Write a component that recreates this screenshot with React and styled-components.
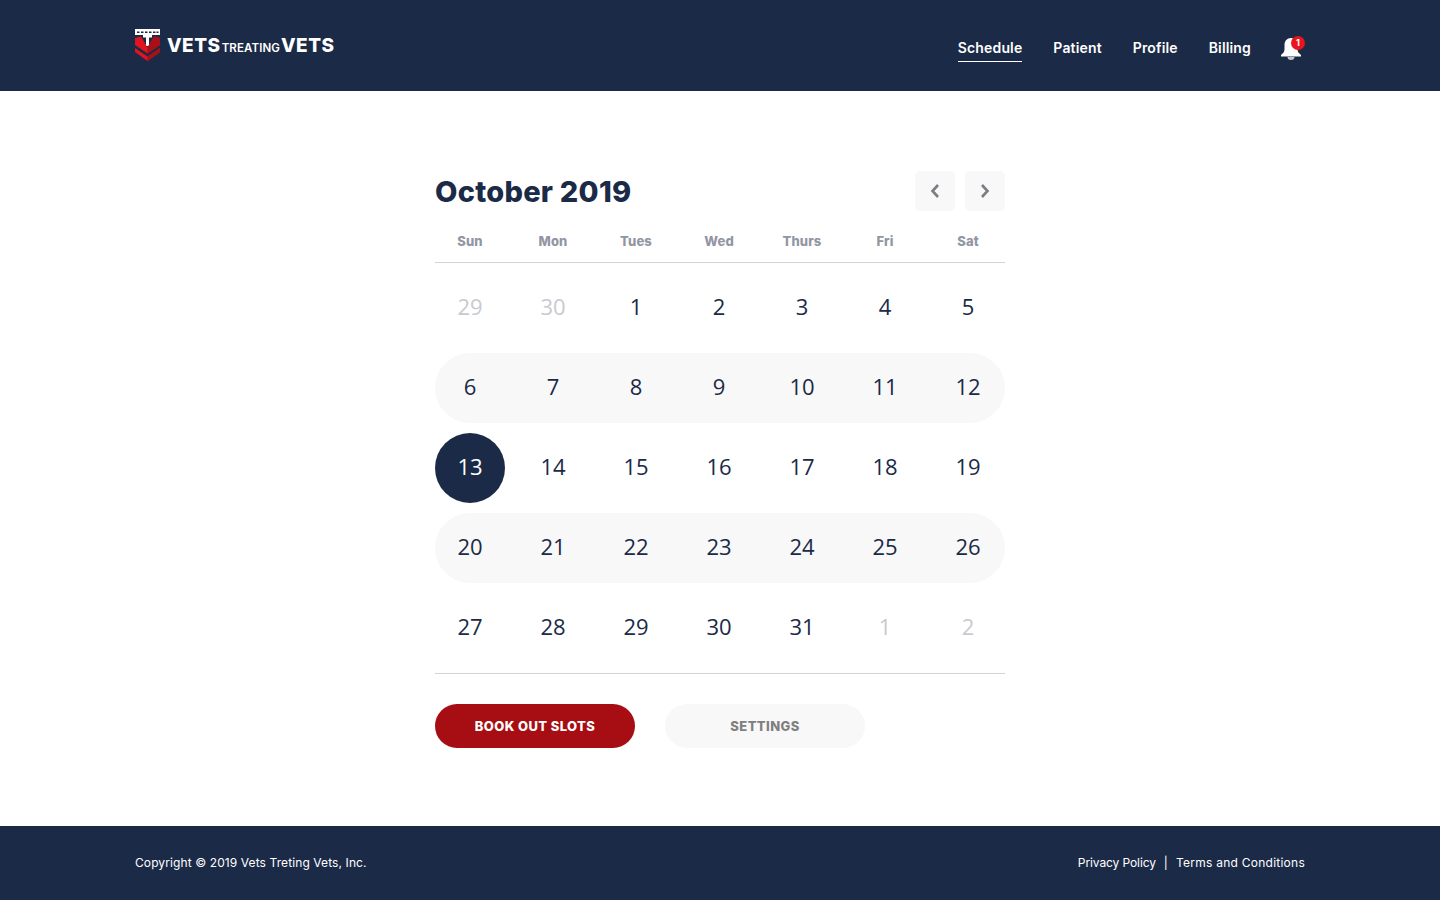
import React from "react";
import styled, { createGlobalStyle } from "styled-components";

const NAVY = "#1b2a47";

const GlobalStyle = createGlobalStyle`
  html, body { margin: 0; padding: 0; background: #fff; }
  body { font-family: Inter, "Liberation Sans", sans-serif; color: ${NAVY}; }
  * { box-sizing: border-box; }
`;

const weeks = [
  [[29, 1], [30, 1], [1], [2], [3], [4], [5]],
  [[6], [7], [8], [9], [10], [11], [12]],
  [[13, 0, 1], [14], [15], [16], [17], [18], [19]],
  [[20], [21], [22], [23], [24], [25], [26]],
  [[27], [28], [29], [30], [31], [1, 1], [2, 1]],
];

const days = ["Sun", "Mon", "Tues", "Wed", "Thurs", "Fri", "Sat"];
const navItems = ["Schedule", "Patient", "Profile", "Billing"];

function Shield() {
  return (
    <svg width="26" height="33" viewBox="0 0 26 33">
      <path d="M0 0h25v6H0z" fill="#fff" />
      <path d="M2 2.500h2.500V4H2zM6 2.500h2.500V4H6zM10 2.500h2.500V4H10zM14 2.500h2.500V4H14zM18 2.500h2.500V4H18zM21.500 2.500h2V4h-2z" fill="#1b2a47" />
      <path d="M8 6h9v2.500h-3V17h-3V8.500H8z" fill="#fff" />
      <path d="M0 9l6-1.500 6.500 11 6.500-11L25 9v7l-12.500 8.500L0 16z" fill="#e0141e" />
      <path d="M12.500 18.500L19 7.500 25 9v7l-12.500 8.500z" fill="#a80f16" />
      <path d="M0 19l12.500 8.500L25 19v4l-12.500 9L0 23z" fill="#e0141e" />
      <path d="M12.500 27.500L25 19v4l-12.500 9z" fill="#a80f16" />
    </svg>
  );
}

function Bell() {
  return (
    <svg width="20" height="22" viewBox="0 0 20 22">
      <path d="M10 0C6 0 3.500 3 3.500 7v4.500C3.500 14 1.800 15.500 0 17v1.500h20V17c-1.800-1.500-3.500-3-3.500-5.500V7C16.500 3 14 0 10 0z" fill="#fff" />
      <path d="M6.500 19h7a3.500 3 0 0 1-7 0z" fill="#c3c7ce" />
    </svg>
  );
}

function Chevron({ flip }) {
  return (
    <svg width="10" height="14" viewBox="0 0 10 14">
      <path
        d={flip ? "M2 1l5.500 6L2 13" : "M8 1L2.500 7 8 13"}
        fill="none"
        stroke="#7a7d84"
        strokeWidth="2.600"
      />
    </svg>
  );
}

export default function App() {
  return (
    <Page>
      <GlobalStyle />
      <Header>
        <Logo>
          <Shield />
          <LogoText>
            VETS<LogoSmall>TREATING</LogoSmall>VETS
          </LogoText>
        </Logo>
        <Nav>
          {navItems.map((item, i) => (
            <NavLink key={item} $active={i === 0}>{item}</NavLink>
          ))}
          <BellWrap>
            <Bell />
            <Badge>1</Badge>
          </BellWrap>
        </Nav>
      </Header>

      <Main>
        <Calendar>
          <TitleRow>
            <Title>October 2019</Title>
            <Arrows>
              <ArrowButton><Chevron /></ArrowButton>
              <ArrowButton><Chevron flip /></ArrowButton>
            </Arrows>
          </TitleRow>
          <DayRow>
            {days.map((d) => <DayName key={d}>{d}</DayName>)}
          </DayRow>
          <Weeks>
            {weeks.map((week, w) => (
              <Week key={w} $shaded={w % 2 === 1}>
                {week.map(([n, muted, selected], i) => (
                  <DateCell key={i} $muted={muted} $selected={selected}>{n}</DateCell>
                ))}
              </Week>
            ))}
          </Weeks>
          <Actions>
            <PrimaryButton>BOOK OUT SLOTS</PrimaryButton>
            <SecondaryButton>SETTINGS</SecondaryButton>
          </Actions>
        </Calendar>
      </Main>

      <Footer>
        <span>Copyright © 2019 Vets Treting Vets, Inc.</span>
        <FooterLinks>
          <PrivacyLink>Privacy Policy</PrivacyLink>
          <span>|</span>
          <TermsLink>Terms and Conditions</TermsLink>
        </FooterLinks>
      </Footer>
    </Page>
  );
}

const Page = styled.div`
  width: 1440px;
  height: 900px;
  display: flex;
  flex-direction: column;
  overflow: hidden;
`;

const Header = styled.header`
  height: 91px;
  flex-shrink: 0;
  background: ${NAVY};
  padding: 0 135px;
  display: flex;
  align-items: center;
  justify-content: space-between;
`;

const Logo = styled.div`
  display: flex;
  align-items: center;
  gap: 6px;
`;

const LogoText = styled.div`
  display: flex;
  align-items: baseline;
  color: #fff;
  font-weight: 800;
  font-size: 19px;
  letter-spacing: 0.5px;
`;

const LogoSmall = styled.span`
  font-size: 11.500px;
  font-weight: 600;
  letter-spacing: 0.1px;
  margin: 0 1px;
`;

const Nav = styled.nav`
  display: flex;
  align-items: center;
  gap: 31px;
`;

const NavLink = styled.a`
  color: #fff;
  font-size: 14px;
  font-weight: 600;
  line-height: 20px;
  letter-spacing: 0.15px;
  padding: 4px 0 3px;
  margin: 6px 0 1px;
  border-bottom: 1px solid ${(p) => (p.$active ? "#fff" : "transparent")};
`;

const BellWrap = styled.div`
  position: relative;
  width: 24px;
  height: 22px;
  margin: 7px 0 0 -1px;
  display: flex;
`;

const Badge = styled.span`
  position: absolute;
  top: -2px;
  right: 0;
  width: 14px;
  height: 14px;
  border-radius: 50%;
  background: #e8141e;
  color: #fff;
  font-size: 9px;
  font-weight: 700;
  line-height: 14px;
  text-align: center;
`;

const Main = styled.main`
  flex: 1;
  display: flex;
  justify-content: center;
  padding-top: 80px;
`;

const Calendar = styled.div`
  width: 570px;
`;

const TitleRow = styled.div`
  display: flex;
  align-items: center;
  justify-content: space-between;
  height: 40px;
`;

const Title = styled.h1`
  margin: 0;
  font-size: 29px;
  font-weight: 800;
  letter-spacing: 0.25px;
  color: ${NAVY};
`;

const Arrows = styled.div`
  display: flex;
  gap: 10px;
`;

const ArrowButton = styled.button`
  width: 40px;
  height: 40px;
  border: 0;
  border-radius: 5px;
  background: #f8f8f8;
  display: flex;
  align-items: center;
  justify-content: center;
  padding: 0;
`;

const DayRow = styled.div`
  display: grid;
  grid-template-columns: repeat(7, 70px);
  column-gap: 13px;
  height: 52px;
  padding-top: 21px;
  border-bottom: 1px solid #d3d4d6;
`;

const DayName = styled.div`
  text-align: center;
  font-size: 13px;
  font-weight: 800;
  line-height: 18px;
  letter-spacing: 0.15px;
  color: #9296a3;
`;

const Weeks = styled.div`
  display: flex;
  flex-direction: column;
  gap: 10px;
  padding: 10px 0;
  border-bottom: 1px solid #d3d4d6;
`;

const Week = styled.div`
  display: grid;
  grid-template-columns: repeat(7, 70px);
  column-gap: 13px;
  height: 70px;
  border-radius: 35px;
  background: ${(p) => (p.$shaded ? "#f8f8f8" : "transparent")};
`;

const DateCell = styled.div`
  display: flex;
  align-items: center;
  justify-content: center;
  padding-bottom: 4px;
  border-radius: 50%;
  font-family: "Open Sans", sans-serif;
  font-size: 22px;
  color: ${(p) => (p.$selected ? "#fff" : p.$muted ? "#c8cad0" : NAVY)};
  background: ${(p) => (p.$selected ? NAVY : "transparent")};
`;

const Actions = styled.div`
  display: flex;
  gap: 30px;
  margin-top: 30px;
`;

const PillButton = styled.button`
  width: 200px;
  height: 44px;
  border: 0;
  border-radius: 22px;
  font-family: Inter, sans-serif;
  font-size: 13px;
  font-weight: 800;
  letter-spacing: 0.4px;
`;

const PrimaryButton = styled(PillButton)`
  background: #a70e13;
  color: #fff;
`;

const SecondaryButton = styled(PillButton)`
  background: #f8f8f8;
  color: #7f7f7f;
`;

const Footer = styled.footer`
  height: 74px;
  flex-shrink: 0;
  background: ${NAVY};
  padding: 0 135px 2px;
  display: flex;
  align-items: center;
  justify-content: space-between;
  color: #fff;
  font-size: 12px;
  letter-spacing: 0.1px;
`;

const FooterLinks = styled.div`
  display: flex;
  gap: 8px;
`;

const PrivacyLink = styled.span`
  letter-spacing: -0.1px;
`;

const TermsLink = styled.span`
  letter-spacing: 0.25px;
`;
